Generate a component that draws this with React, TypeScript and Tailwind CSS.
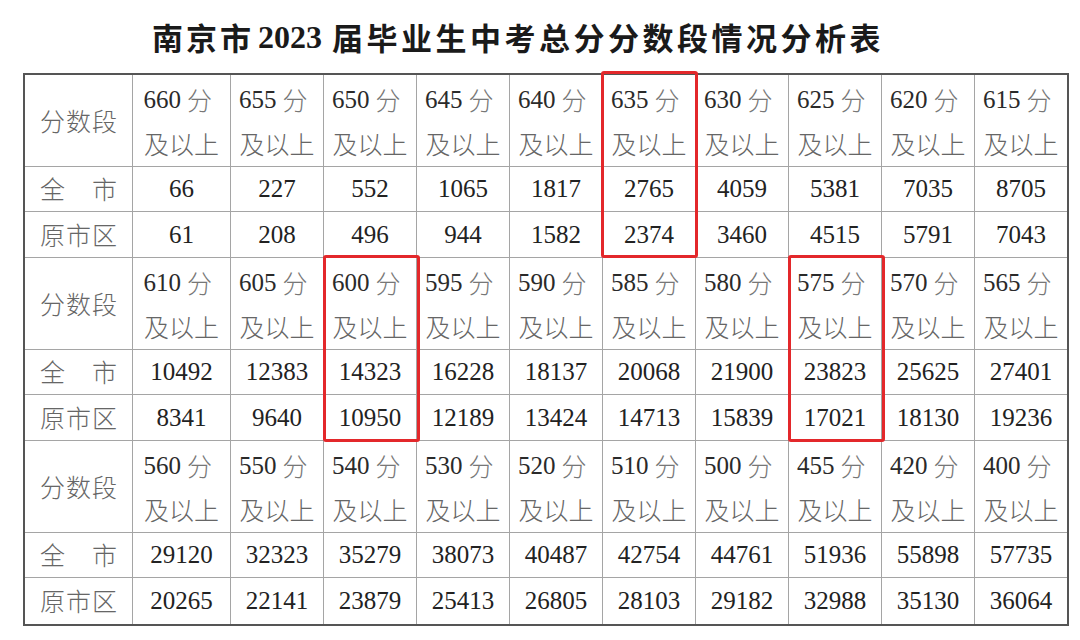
import React from "react";

type Block = { scores: string[]; all: string[]; city: string[] };

const blocks: Block[] = [
  {
    scores: ["660", "655", "650", "645", "640", "635", "630", "625", "620", "615"],
    all: ["66", "227", "552", "1065", "1817", "2765", "4059", "5381", "7035", "8705"],
    city: ["61", "208", "496", "944", "1582", "2374", "3460", "4515", "5791", "7043"],
  },
  {
    scores: ["610", "605", "600", "595", "590", "585", "580", "575", "570", "565"],
    all: ["10492", "12383", "14323", "16228", "18137", "20068", "21900", "23823", "25625", "27401"],
    city: ["8341", "9640", "10950", "12189", "13424", "14713", "15839", "17021", "18130", "19236"],
  },
  {
    scores: ["560", "550", "540", "530", "520", "510", "500", "455", "420", "400"],
    all: ["29120", "32323", "35279", "38073", "40487", "42754", "44761", "51936", "55898", "57735"],
    city: ["20265", "22141", "23879", "25413", "26805", "28103", "29182", "32988", "35130", "36064"],
  },
];

const FONT = { fontFamily: '"Liberation Serif", "Noto Sans CJK SC", serif' };
const CJK = { fontFamily: '"Noto Sans CJK SC", sans-serif', fontWeight: 300 };

function Label({ chars, last }: { chars: string[]; last?: boolean }) {
  return (
    <div
      className={`flex items-center justify-between px-[15px] text-[25px] text-[#666] border-r border-[#a5a5a5] ${
        last ? "" : "border-b"
      }`}
      style={CJK}
    >
      {chars.map((c, i) => (
        <span key={i}>{c}</span>
      ))}
    </div>
  );
}

export default function App() {
  const cols = "grid-cols-[108px_98px_93px_93px_93px_93px_93px_93px_93px_93px_92px]";
  return (
    <div className="w-[1080px] h-[640px] bg-white overflow-hidden" style={FONT}>
      <div className="pt-[20px] pl-[152px] h-[54px] flex items-center text-[#1a1a1a] font-bold">
        <span className="text-[31px] leading-[34px] tracking-[3px]" style={{ fontFamily: '"Noto Sans CJK SC", sans-serif' }}>南京市</span>
        <span className="text-[32px] leading-[34px] ml-[4px]" style={{ fontFamily: '"Liberation Serif", serif' }}>2023</span>
        <span className="text-[31px] leading-[34px] tracking-[3.5px] ml-[10px]" style={{ fontFamily: '"Noto Sans CJK SC", sans-serif' }}>届毕业生中考总分分数段情况分析表</span>
      </div>
      <div className="relative ml-[23px] mt-[19px] w-[1046px] border-2 border-[#555]">
        {blocks.map((b, bi) => {
          const lastBlock = bi === blocks.length - 1;
          return (
            <div key={bi} className={`grid ${cols} grid-rows-[92px_45px_46px]`}>
              <Label chars={["分", "数", "段"]} />
              {b.scores.map((s, i) => (
                <div
                  key={"h" + i}
                  className={`flex flex-col items-center pt-[2px] border-b border-[#a5a5a5] ${i < 9 ? "border-r" : ""}`}
                >
                  <div className="h-[45px] flex items-center text-[25px] text-[#2a2a2a] w-[76px]">
                    {s}
                    <span className="ml-[6px] text-[#777]" style={CJK}>分</span>
                  </div>
                  <div className="h-[45px] flex items-center text-[25px] text-[#666]" style={CJK}>
                    及以上
                  </div>
                </div>
              ))}
              <Label chars={["全", "市"]} />
              {b.all.map((v, i) => (
                <div
                  key={"a" + i}
                  className={`flex items-center justify-center text-[25px] text-[#222] border-b border-[#a5a5a5] ${i < 9 ? "border-r" : ""}`}
                >
                  {v}
                </div>
              ))}
              <Label chars={["原", "市", "区"]} last={lastBlock} />
              {b.city.map((v, i) => (
                <div
                  key={"c" + i}
                  className={`flex items-center justify-center text-[25px] text-[#222] border-[#a5a5a5] ${lastBlock ? "" : "border-b"} ${i < 9 ? "border-r" : ""}`}
                >
                  {v}
                </div>
              ))}
            </div>
          );
        })}
        <div className="absolute left-[576px] top-[-4px] w-[97px] h-[187px] border-[3px] border-[#e3282b] rounded-[3px]" />
        <div className="absolute left-[298px] top-[180px] w-[97px] h-[187px] border-[3px] border-[#e3282b] rounded-[3px]" />
        <div className="absolute left-[763px] top-[180px] w-[97px] h-[187px] border-[3px] border-[#e3282b] rounded-[3px]" />
      </div>
    </div>
  );
}
